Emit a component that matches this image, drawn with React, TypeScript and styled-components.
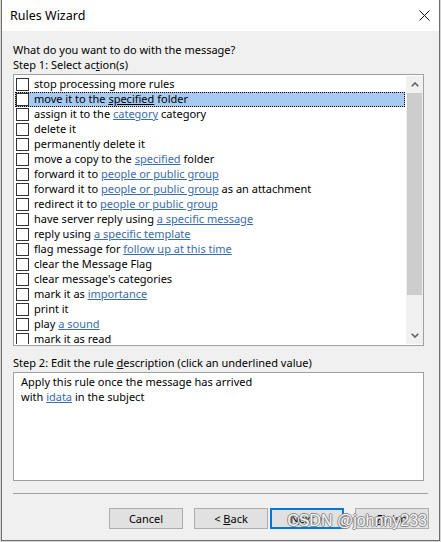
import React from "react";
import styled, { createGlobalStyle } from "styled-components";

const GlobalStyle = createGlobalStyle`
  html, body {
    margin: 0;
    padding: 0;
    background: #d6d6d6;
  }
  body {
    font-family: "Noto Sans", "Segoe UI", sans-serif;
    color: #000;
  }
`;

const Frame = styled.div`
  position: relative;
  box-sizing: border-box;
  width: 439px;
  height: 541px;
  margin-left: 1px;
  border: 1px solid #6d6d6d;
  border-top: none;
  background: #f0f0f0;
  display: flex;
  flex-direction: column;
`;

const TitleBar = styled.div`
  height: 31px;
  flex-shrink: 0;
  background: #fff;
  display: flex;
  align-items: center;
  justify-content: space-between;
  padding: 0 9px 0 8px;
`;

const Title = styled.span`
  font-size: 12.5px;
  line-height: 18px;
`;

const Body = styled.div`
  display: flex;
  flex-direction: column;
  padding: 11px 10px 0 11px;
`;

const Label = styled.div<{ $mt?: number }>`
  font-size: 11px;
  line-height: 15px;
  white-space: nowrap;
  margin-top: ${(p) => p.$mt ?? 0}px;
`;

const Key = styled.span`
  text-decoration: underline;
`;

const ListBox = styled.div`
  box-sizing: border-box;
  width: 411px;
  height: 272px;
  margin-top: 2px;
  border: 1px solid #a0a0a0;
  padding: 1px 0 1px 1px;
  background: #fff;
  display: flex;
`;

const Rows = styled.div`
  flex: 1;
  padding-top: 1px;
  margin-right: 1px;
  overflow: hidden;
`;

const Row = styled.div<{ $selected?: boolean }>`
  height: 15px;
  display: flex;
  align-items: center;
  background: ${(p) => (p.$selected ? "#a6caf0" : "transparent")};
  outline: ${(p) => (p.$selected ? "1px dotted #000" : "none")};
  outline-offset: -1px;
`;

const Check = styled.span`
  box-sizing: border-box;
  width: 13px;
  height: 13px;
  flex-shrink: 0;
  margin: 0 5px 0 1px;
  border: 1px solid #333;
  background: #fff;
`;

const RowText = styled.span`
  font-size: 11px;
  line-height: 14px;
  padding-bottom: 1px;
  white-space: nowrap;
`;

const Link = styled.span<{ $plain?: boolean }>`
  color: ${(p) => (p.$plain ? "#000" : "#3a6ca8")};
  text-decoration: underline;
`;

const ScrollBar = styled.div`
  width: 17px;
  flex-shrink: 0;
  display: flex;
  flex-direction: column;
  background: #f0f0f0;
`;

const ArrowButton = styled.div`
  height: 17px;
  flex-shrink: 0;
  display: flex;
  align-items: center;
  justify-content: center;
`;

const Thumb = styled.div`
  height: 202px;
  margin: 0 1px;
  background: #cdcdcd;
`;

const Track = styled.div`
  flex: 1;
`;

const DescBox = styled.div`
  box-sizing: border-box;
  width: 411px;
  height: 109px;
  margin-top: 2px;
  border: 1px solid #a0a0a0;
  background: #fff;
  padding: 1px 7px;
  font-size: 11px;
  line-height: 15px;
`;

const Separator = styled.div`
  width: 415px;
  height: 1px;
  margin-top: 12px;
  background: #a0a0a0;
`;

const ButtonRow = styled.div`
  display: flex;
  justify-content: flex-end;
  margin-top: 14px;
`;

const Button = styled.button<{ $gap?: number; $default?: boolean }>`
  box-sizing: border-box;
  width: 74px;
  height: 21px;
  margin: 0 0 0 ${(p) => p.$gap ?? 0}px;
  padding: 0;
  border: ${(p) => (p.$default ? "2px solid #0078d7" : "1px solid #adadad")};
  background: #e1e1e1;
  font-family: inherit;
  font-size: 11px;
  line-height: 15px;
  color: #000;
`;

const Watermark = styled.div`
  position: absolute;
  right: 12px;
  bottom: 10px;
  font-family: "Liberation Sans", Arial, sans-serif;
  font-size: 16px;
  color: rgba(255, 255, 255, 0.95);
  text-shadow: 1px 0 0 #8a8a8a, -1px 0 0 #8a8a8a, 0 1px 0 #8a8a8a, 0 -1px 0 #8a8a8a;
  white-space: nowrap;
`;

type Seg = string | { link: string };

const actions: Seg[][] = [
  ["stop processing more rules"],
  ["move it to the ", { link: "specified" }, " folder"],
  ["assign it to the ", { link: "category" }, " category"],
  ["delete it"],
  ["permanently delete it"],
  ["move a copy to the ", { link: "specified" }, " folder"],
  ["forward it to ", { link: "people or public group" }],
  ["forward it to ", { link: "people or public group" }, " as an attachment"],
  ["redirect it to ", { link: "people or public group" }],
  ["have server reply using ", { link: "a specific message" }],
  ["reply using ", { link: "a specific template" }],
  ["flag message for ", { link: "follow up at this time" }],
  ["clear the Message Flag"],
  ["clear message's categories"],
  ["mark it as ", { link: "importance" }],
  ["print it"],
  ["play ", { link: "a sound" }],
  ["mark it as read"],
];

const Chevron = ({ up }: { up?: boolean }) => (
  <svg width="8" height="5" viewBox="0 0 8 5">
    <polyline
      points={up ? "0.7,4.3 4,1 7.3,4.3" : "0.7,0.7 4,4 7.3,0.7"}
      fill="none"
      stroke="#606060"
      strokeWidth="1.6"
    />
  </svg>
);

const CloseIcon = () => (
  <svg width="11" height="11" viewBox="0 0 11 11">
    <path d="M0.5 0.5 L10.5 10.5 M10.5 0.5 L0.5 10.5" stroke="#111" strokeWidth="1" />
  </svg>
);

export default function App() {
  return (
    <>
      <GlobalStyle />
      <Frame>
        <TitleBar>
          <Title>Rules Wizard</Title>
          <CloseIcon />
        </TitleBar>
        <Body>
          <Label>What do you want to do with the message?</Label>
          <Label>
            Step 1: Select ac<Key>t</Key>ion(s)
          </Label>
          <ListBox>
            <Rows>
              {actions.map((segs, i) => (
                <Row key={i} $selected={i === 1}>
                  <Check />
                  <RowText>
                    {segs.map((s, j) =>
                      typeof s === "string" ? (
                        <React.Fragment key={j}>{s}</React.Fragment>
                      ) : (
                        <Link key={j} $plain={i === 1}>
                          {s.link}
                        </Link>
                      )
                    )}
                  </RowText>
                </Row>
              ))}
            </Rows>
            <ScrollBar>
              <ArrowButton>
                <Chevron up />
              </ArrowButton>
              <Thumb />
              <Track />
              <ArrowButton>
                <Chevron />
              </ArrowButton>
            </ScrollBar>
          </ListBox>
          <Label $mt={9}>
            Step 2: Edit the rule <Key>d</Key>escription (click an underlined value)
          </Label>
          <DescBox>
            Apply this rule once the message has arrived
            <br />
            with <Link>idata</Link> in the subject
          </DescBox>
          <Separator />
          <ButtonRow>
            <Button>Cancel</Button>
            <Button $gap={11}>
              &lt; <Key>B</Key>ack
            </Button>
            <Button $gap={2} $default>
              <Key>N</Key>ext &gt;
            </Button>
            <Button $gap={11}>
              <Key>F</Key>inish
            </Button>
          </ButtonRow>
        </Body>
        <Watermark>CSDN @johnny233</Watermark>
      </Frame>
    </>
  );
}
